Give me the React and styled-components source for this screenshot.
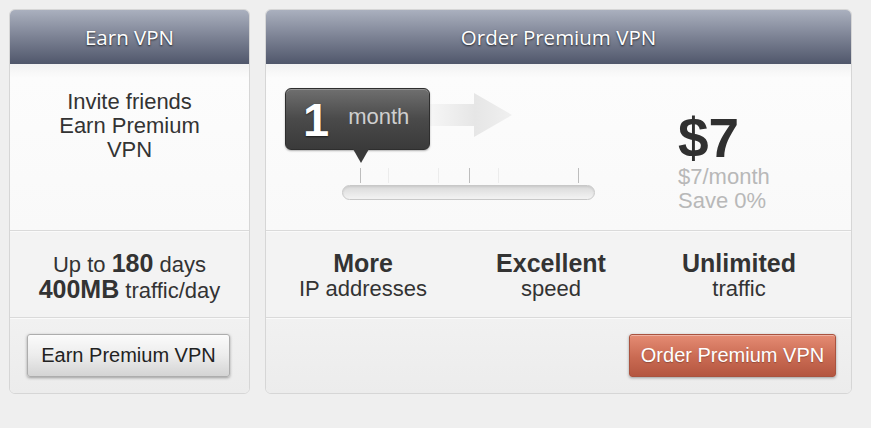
import React from 'react';
import styled, { createGlobalStyle } from 'styled-components';

const GlobalStyle = createGlobalStyle`
  body {
    margin: 0;
    background: #efefef;
    font-family: 'Liberation Sans', Arial, sans-serif;
  }
`;

const Page = styled.div`
  display: flex;
  align-items: flex-start;
  gap: 15px;
  padding: 9px 0 0 9px;
`;

const Card = styled.div`
  width: ${(p) => p.width}px;
  box-sizing: border-box;
  border: 1px solid #d6d6d6;
  border-radius: 6px;
  background: #efefef;
  overflow: hidden;
  box-shadow: inset 0 0 0 1px #fbfbfb;
`;

const Header = styled.div`
  height: 54px;
  display: flex;
  align-items: center;
  justify-content: center;
  background: linear-gradient(to bottom, #aab0be 0%, #7c8294 50%, #50576b 100%);
  color: #fff;
  font-family: 'Open Sans', 'Noto Sans', sans-serif;
  font-size: 20.5px;
  text-shadow: 0 1px 2px rgba(0, 0, 0, 0.7);
`;

const Top = styled.div`
  height: 167px;
  box-sizing: border-box;
  background: linear-gradient(to bottom, #f2f2f2 0px, #fcfcfc 14px, #f9f9f9 100%);
  border-bottom: 1px solid #dadada;
`;

const Intro = styled.div`
  width: 150px;
  margin: 0 auto;
  padding-top: 26px;
  text-align: center;
  font-size: 22px;
  line-height: 24px;
  color: #333;
`;

const Stats = styled.div`
  height: 87px;
  box-sizing: border-box;
  border-top: 1px solid #fafafa;
  border-bottom: 1px solid #dadada;
  background: #f3f3f3;
  display: ${(p) => (p.grid ? 'grid' : 'block')};
  grid-template-columns: repeat(3, 188px);
  padding: 19px 0 0 ${(p) => (p.grid ? 3 : 0)}px;
  text-align: center;
  font-size: 22px;
  line-height: 25px;
  color: #333;

  b {
    font-size: 25px;
  }
`;

const Stat = styled.div`
  display: flex;
  flex-direction: column;

  b {
    font-size: 25px;
  }
`;

const Bottom = styled.div`
  height: 75px;
  box-sizing: border-box;
  border-top: 1px solid #fafafa;
  background: linear-gradient(to bottom, #f1f1f1, #ececec);
  display: flex;
  justify-content: ${(p) => (p.right ? 'flex-end' : 'flex-start')};
  padding: 15px ${(p) => (p.right ? 15 : 0)}px 0 ${(p) => (p.right ? 0 : 17)}px;
`;

const Button = styled.button`
  width: ${(p) => p.width}px;
  height: 43px;
  border-radius: 3px;
  font-family: 'Liberation Sans', Arial, sans-serif;
  font-size: 20px;
  cursor: pointer;
  border: 1px solid ${(p) => (p.primary ? '#a9533f' : '#adadad')};
  color: ${(p) => (p.primary ? '#fff' : '#222')};
  background: ${(p) =>
    p.primary
      ? 'linear-gradient(to bottom, #e58c74, #c96a52 55%, #b45640)'
      : 'linear-gradient(to bottom, #fbfbfb, #ececec 50%, #d4d4d4)'};
  box-shadow: 0 1px 3px rgba(0, 0, 0, 0.35), inset 0 1px 0 rgba(255, 255, 255, 0.35);
  text-shadow: ${(p) => (p.primary ? '0 1px 1px rgba(0,0,0,0.25)' : 'none')};
`;

const SliderRow = styled.div`
  display: flex;
  padding: 24px 0 0 19px;
`;

const Slider = styled.div`
  width: 310px;
`;

const BadgeRow = styled.div`
  display: flex;
  align-items: flex-start;
`;

const Badge = styled.div`
  position: relative;
  width: 145px;
  height: 62px;
  box-sizing: border-box;
  border: 1px solid #2e2e2e;
  border-radius: 6px;
  background: linear-gradient(to bottom, #6f6f6f, #4a4a4a 50%, #3a3a3a);
  box-shadow: inset 0 1px 0 rgba(255, 255, 255, 0.25), 0 1px 2px rgba(0, 0, 0, 0.3);
  display: flex;
  align-items: center;
  padding-left: 17px;
  gap: 19px;

  &::after {
    content: '';
    position: absolute;
    left: 67px;
    bottom: -14px;
    border-left: 8px solid transparent;
    border-right: 8px solid transparent;
    border-top: 14px solid #3a3a3a;
  }
`;

const Big = styled.span`
  font-size: 47px;
  font-weight: bold;
  color: #fff;
  text-shadow: 0 1px 2px rgba(0, 0, 0, 0.6);
`;

const Unit = styled.span`
  font-size: 22px;
  color: #cfcfcf;
  margin-top: -4px;
`;

const Arrow = styled.svg`
  margin-top: 5px;
`;

const Ticks = styled.div`
  position: relative;
  height: 17px;
  margin: 18px 0 0 57px;
  width: 253px;
`;

const Tick = styled.span`
  position: absolute;
  top: 0;
  left: ${(p) => p.at}px;
  width: 1px;
  height: 15px;
  background: ${(p) => (p.faint ? '#ececec' : '#bdbdbd')};
`;

const Track = styled.div`
  margin-left: 57px;
  width: 253px;
  height: 15px;
  box-sizing: border-box;
  border: 1px solid #c8c8c8;
  border-radius: 8px;
  background: linear-gradient(to bottom, #d9d9d9, #e9e9e9 60%, #f3f3f3);
  box-shadow: inset 0 1px 2px rgba(0, 0, 0, 0.08);
`;

const Price = styled.div`
  margin-left: auto;
  width: 173px;
  padding-top: 23px;
`;

const Amount = styled.div`
  font-size: 55px;
  font-weight: bold;
  line-height: 54px;
  color: #303030;
`;

const Note = styled.div`
  font-size: 22px;
  line-height: 24px;
  color: #b8b8b8;
`;

const ticks = [
  { at: 18 },
  { at: 46, faint: true },
  { at: 96, faint: true },
  { at: 127 },
  { at: 156, faint: true },
  { at: 236 },
];

const App = () => {
  return (
    <>
      <GlobalStyle />
      <Page>
        <Card width={241}>
          <Header>Earn VPN</Header>
          <Top>
            <Intro>Invite friends Earn Premium VPN</Intro>
          </Top>
          <Stats>
            <div>
              Up to <b>180</b> days
            </div>
            <div>
              <b>400MB</b> traffic/day
            </div>
          </Stats>
          <Bottom>
            <Button width={203}>Earn Premium VPN</Button>
          </Bottom>
        </Card>

        <Card width={587}>
          <Header>Order Premium VPN</Header>
          <Top>
            <SliderRow>
              <Slider>
                <BadgeRow>
                  <Badge>
                    <Big>1</Big>
                    <Unit>month</Unit>
                  </Badge>
                  <Arrow width='84' height='46' viewBox='0 0 84 46'>
                    <defs>
                      <linearGradient id='arrowFade' x1='0' x2='1' y1='0' y2='0'>
                        <stop offset='0' stopColor='#f6f6f6' />
                        <stop offset='0.55' stopColor='#e6e6e6' />
                        <stop offset='1' stopColor='#f0f0f0' />
                      </linearGradient>
                    </defs>
                    <path d='M0 11 H44 V0 L82 22 L44 44 V33 H0 Z' fill='url(#arrowFade)' />
                  </Arrow>
                </BadgeRow>
                <Ticks>
                  {ticks.map((t) => (
                    <Tick key={t.at} at={t.at} faint={t.faint} />
                  ))}
                </Ticks>
                <Track />
              </Slider>
              <Price>
                <Amount>$7</Amount>
                <Note>$7/month</Note>
                <Note>Save 0%</Note>
              </Price>
            </SliderRow>
          </Top>
          <Stats grid>
            <Stat>
              <b>More</b>
              <span>IP addresses</span>
            </Stat>
            <Stat>
              <b>Excellent</b>
              <span>speed</span>
            </Stat>
            <Stat>
              <b>Unlimited</b>
              <span>traffic</span>
            </Stat>
          </Stats>
          <Bottom right>
            <Button primary width={207}>
              Order Premium VPN
            </Button>
          </Bottom>
        </Card>
      </Page>
    </>
  );
};

export default App;
